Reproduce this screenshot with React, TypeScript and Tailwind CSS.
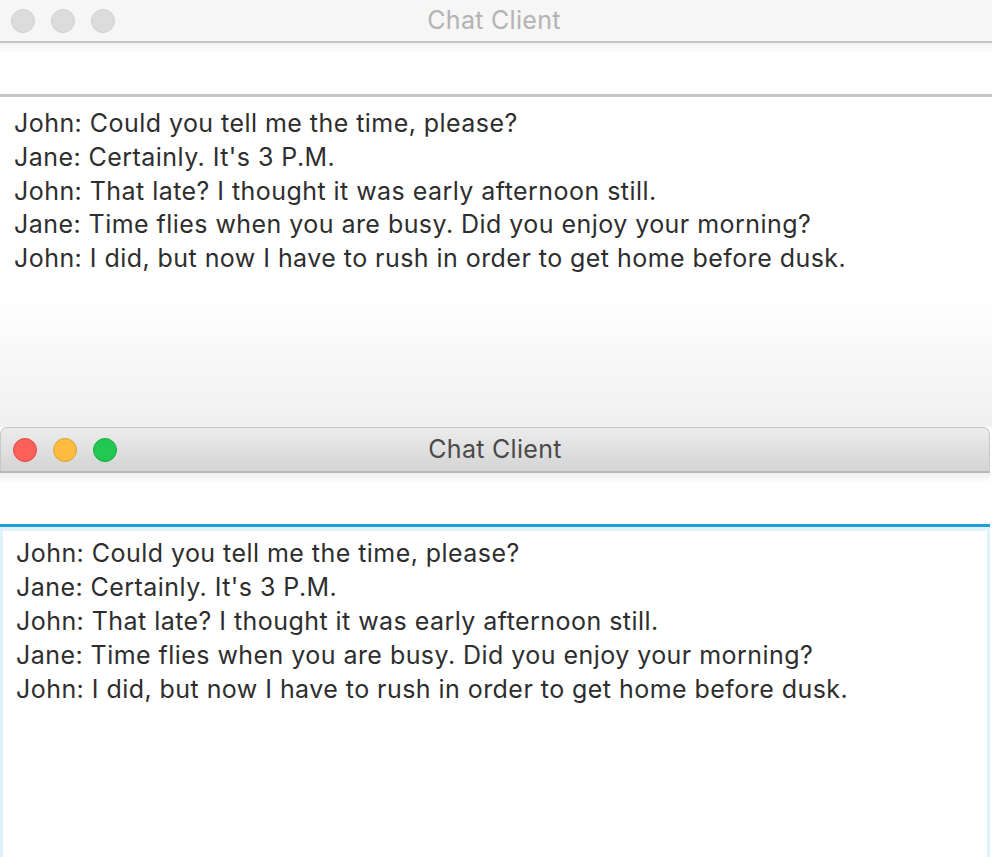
const lines = [
  "John: Could you tell me the time, please?",
  "Jane: Certainly. It's 3 P.M.",
  "John: That late? I thought it was early afternoon still.",
  "Jane: Time flies when you are busy. Did you enjoy your morning?",
  "John: I did, but now I have to rush in order to get home before dusk.",
];

function Light({ color }: { color: string }) {
  return <span className={`block w-6 h-6 rounded-full ${color}`} />;
}

export default function App() {
  return (
    <div className="w-[992px] h-[857px] overflow-hidden bg-white font-['Inter','Noto_Sans',sans-serif]">
      {/* back window, inactive */}
      <div className="h-[427px] flex flex-col">
        <div className="relative h-[41px] shrink-0 flex items-center bg-[#f6f6f6]">
          <div className="flex gap-4 pl-[11px]">
            <Light color="bg-[#dcdcdc] border border-[#d0d0d0]" />
            <Light color="bg-[#dcdcdc] border border-[#d0d0d0]" />
            <Light color="bg-[#dcdcdc] border border-[#d0d0d0]" />
          </div>
          <span className="absolute left-0 right-0 -translate-x-[2px] text-center text-[25px] tracking-[0.3px] text-[#b3b3b3]">Chat Client</span>
        </div>
        <div className="h-[2px] bg-[#c4c4c4]" />
        <div className="h-[51px] shrink-0 bg-gradient-to-b from-[#f3f3f3] to-white to-[20%]" />
        <div className="h-[3px] bg-[#c6c6c6]" />
        <div className="flex-1 px-[14px] pt-[10px] text-[25px] tracking-[0.45px] leading-[33.8px] text-[#2e2e2e] bg-gradient-to-b from-white via-white via-[60%] to-[#f0f0f0]">
          {lines.map((l) => (
            <div key={l}>{l}</div>
          ))}
        </div>
      </div>

      {/* front window, focused */}
      <div className="h-[430px] mr-[2px] flex flex-col">
        <div className="relative h-[44px] shrink-0 flex items-center rounded-t-[7px] border-t border-x border-[#c8c8c8] bg-gradient-to-b from-[#ececec] to-[#d4d4d4]">
          <div className="flex gap-4 pl-[12px]">
            <Light color="bg-[#fc605b] border border-[#de4a45]" />
            <Light color="bg-[#fdbc40] border border-[#dea235]" />
            <Light color="bg-[#22c84f] border border-[#1aab3c]" />
          </div>
          <span className="absolute left-0 right-0 text-center text-[25px] tracking-[0.3px] text-[#4a4a4a]">Chat Client</span>
        </div>
        <div className="h-[2px] bg-[#b8b8b8]" />
        <div className="h-[51px] shrink-0 bg-gradient-to-b from-[#efefef] to-white to-[20%]" />
        <div className="h-[3px] bg-[#1d9ed8]" />
        <div className="flex-1 border-x-[3px] border-[#dff1fa] bg-white">
          <div className="h-[4px] bg-[#e3f2f9]" />
          <div className="pl-[13px] pt-[5px] text-[25px] tracking-[0.45px] leading-[34px] text-[#2e2e2e]">
            {lines.map((l) => (
              <div key={l}>{l}</div>
            ))}
          </div>
        </div>
      </div>
    </div>
  );
}
